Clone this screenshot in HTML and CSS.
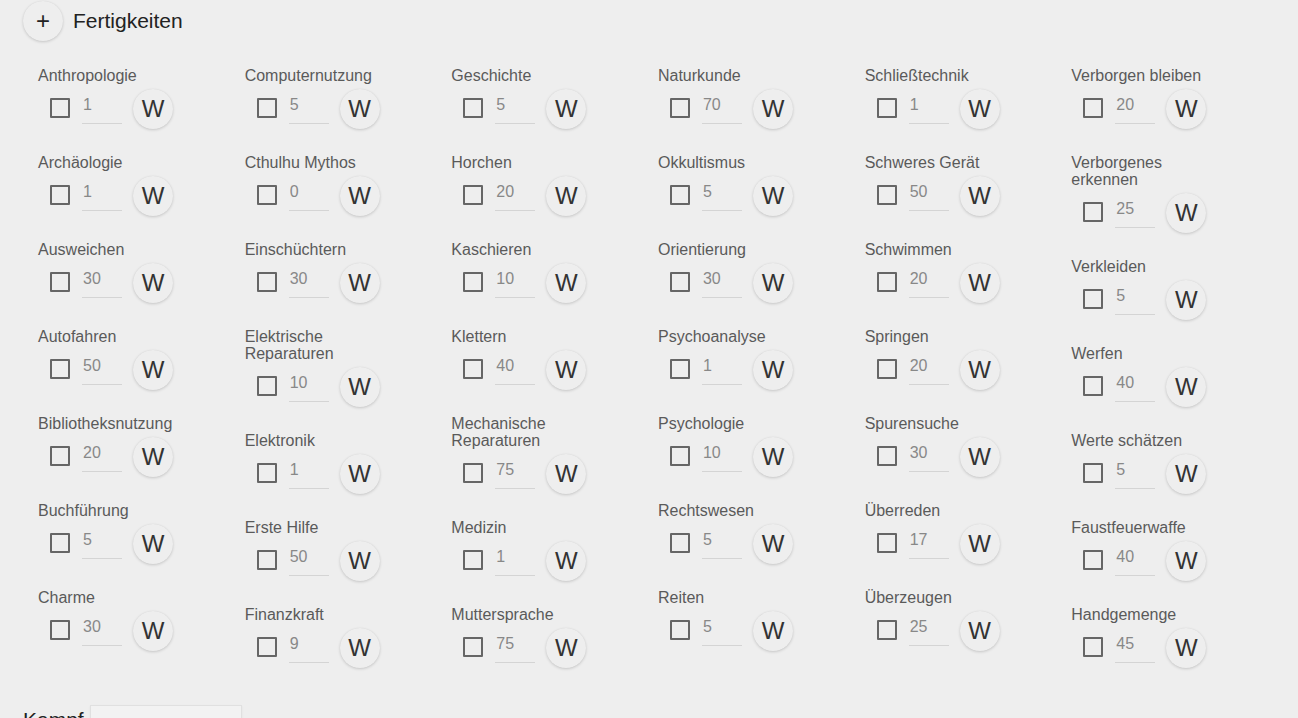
FILE: index.html
```html
<!DOCTYPE html>
<html lang="de">
<head>
  <meta charset="UTF-8">
  <title>Charakterbogen</title>
  <link rel="stylesheet" href="styles.css">
</head>
<body>

  <div class="section-head">
    <button class="round-btn add-btn" type="button">+</button>
    <h2>Fertigkeiten</h2>
  </div>

  <div class="skills">
    <div class="skill-col">
      <div class="skill"><label>Anthropologie</label><div class="skill-row"><input type="checkbox"><input class="val" type="text" value="1"><button class="round-btn w-btn" type="button">W</button></div></div>
      <div class="skill"><label>Archäologie</label><div class="skill-row"><input type="checkbox"><input class="val" type="text" value="1"><button class="round-btn w-btn" type="button">W</button></div></div>
      <div class="skill"><label>Ausweichen</label><div class="skill-row"><input type="checkbox"><input class="val" type="text" value="30"><button class="round-btn w-btn" type="button">W</button></div></div>
      <div class="skill"><label>Autofahren</label><div class="skill-row"><input type="checkbox"><input class="val" type="text" value="50"><button class="round-btn w-btn" type="button">W</button></div></div>
      <div class="skill"><label>Bibliotheksnutzung</label><div class="skill-row"><input type="checkbox"><input class="val" type="text" value="20"><button class="round-btn w-btn" type="button">W</button></div></div>
      <div class="skill"><label>Buchführung</label><div class="skill-row"><input type="checkbox"><input class="val" type="text" value="5"><button class="round-btn w-btn" type="button">W</button></div></div>
      <div class="skill"><label>Charme</label><div class="skill-row"><input type="checkbox"><input class="val" type="text" value="30"><button class="round-btn w-btn" type="button">W</button></div></div>
    </div>

    <div class="skill-col">
      <div class="skill"><label>Computernutzung</label><div class="skill-row"><input type="checkbox"><input class="val" type="text" value="5"><button class="round-btn w-btn" type="button">W</button></div></div>
      <div class="skill"><label>Cthulhu Mythos</label><div class="skill-row"><input type="checkbox"><input class="val" type="text" value="0"><button class="round-btn w-btn" type="button">W</button></div></div>
      <div class="skill"><label>Einschüchtern</label><div class="skill-row"><input type="checkbox"><input class="val" type="text" value="30"><button class="round-btn w-btn" type="button">W</button></div></div>
      <div class="skill"><label>Elektrische Reparaturen</label><div class="skill-row"><input type="checkbox"><input class="val" type="text" value="10"><button class="round-btn w-btn" type="button">W</button></div></div>
      <div class="skill"><label>Elektronik</label><div class="skill-row"><input type="checkbox"><input class="val" type="text" value="1"><button class="round-btn w-btn" type="button">W</button></div></div>
      <div class="skill"><label>Erste Hilfe</label><div class="skill-row"><input type="checkbox"><input class="val" type="text" value="50"><button class="round-btn w-btn" type="button">W</button></div></div>
      <div class="skill"><label>Finanzkraft</label><div class="skill-row"><input type="checkbox"><input class="val" type="text" value="9"><button class="round-btn w-btn" type="button">W</button></div></div>
    </div>

    <div class="skill-col">
      <div class="skill"><label>Geschichte</label><div class="skill-row"><input type="checkbox"><input class="val" type="text" value="5"><button class="round-btn w-btn" type="button">W</button></div></div>
      <div class="skill"><label>Horchen</label><div class="skill-row"><input type="checkbox"><input class="val" type="text" value="20"><button class="round-btn w-btn" type="button">W</button></div></div>
      <div class="skill"><label>Kaschieren</label><div class="skill-row"><input type="checkbox"><input class="val" type="text" value="10"><button class="round-btn w-btn" type="button">W</button></div></div>
      <div class="skill"><label>Klettern</label><div class="skill-row"><input type="checkbox"><input class="val" type="text" value="40"><button class="round-btn w-btn" type="button">W</button></div></div>
      <div class="skill"><label>Mechanische Reparaturen</label><div class="skill-row"><input type="checkbox"><input class="val" type="text" value="75"><button class="round-btn w-btn" type="button">W</button></div></div>
      <div class="skill"><label>Medizin</label><div class="skill-row"><input type="checkbox"><input class="val" type="text" value="1"><button class="round-btn w-btn" type="button">W</button></div></div>
      <div class="skill"><label>Muttersprache</label><div class="skill-row"><input type="checkbox"><input class="val" type="text" value="75"><button class="round-btn w-btn" type="button">W</button></div></div>
    </div>

    <div class="skill-col">
      <div class="skill"><label>Naturkunde</label><div class="skill-row"><input type="checkbox"><input class="val" type="text" value="70"><button class="round-btn w-btn" type="button">W</button></div></div>
      <div class="skill"><label>Okkultismus</label><div class="skill-row"><input type="checkbox"><input class="val" type="text" value="5"><button class="round-btn w-btn" type="button">W</button></div></div>
      <div class="skill"><label>Orientierung</label><div class="skill-row"><input type="checkbox"><input class="val" type="text" value="30"><button class="round-btn w-btn" type="button">W</button></div></div>
      <div class="skill"><label>Psychoanalyse</label><div class="skill-row"><input type="checkbox"><input class="val" type="text" value="1"><button class="round-btn w-btn" type="button">W</button></div></div>
      <div class="skill"><label>Psychologie</label><div class="skill-row"><input type="checkbox"><input class="val" type="text" value="10"><button class="round-btn w-btn" type="button">W</button></div></div>
      <div class="skill"><label>Rechtswesen</label><div class="skill-row"><input type="checkbox"><input class="val" type="text" value="5"><button class="round-btn w-btn" type="button">W</button></div></div>
      <div class="skill"><label>Reiten</label><div class="skill-row"><input type="checkbox"><input class="val" type="text" value="5"><button class="round-btn w-btn" type="button">W</button></div></div>
    </div>

    <div class="skill-col">
      <div class="skill"><label>Schließtechnik</label><div class="skill-row"><input type="checkbox"><input class="val" type="text" value="1"><button class="round-btn w-btn" type="button">W</button></div></div>
      <div class="skill"><label>Schweres Gerät</label><div class="skill-row"><input type="checkbox"><input class="val" type="text" value="50"><button class="round-btn w-btn" type="button">W</button></div></div>
      <div class="skill"><label>Schwimmen</label><div class="skill-row"><input type="checkbox"><input class="val" type="text" value="20"><button class="round-btn w-btn" type="button">W</button></div></div>
      <div class="skill"><label>Springen</label><div class="skill-row"><input type="checkbox"><input class="val" type="text" value="20"><button class="round-btn w-btn" type="button">W</button></div></div>
      <div class="skill"><label>Spurensuche</label><div class="skill-row"><input type="checkbox"><input class="val" type="text" value="30"><button class="round-btn w-btn" type="button">W</button></div></div>
      <div class="skill"><label>Überreden</label><div class="skill-row"><input type="checkbox"><input class="val" type="text" value="17"><button class="round-btn w-btn" type="button">W</button></div></div>
      <div class="skill"><label>Überzeugen</label><div class="skill-row"><input type="checkbox"><input class="val" type="text" value="25"><button class="round-btn w-btn" type="button">W</button></div></div>
    </div>

    <div class="skill-col">
      <div class="skill"><label>Verborgen bleiben</label><div class="skill-row"><input type="checkbox"><input class="val" type="text" value="20"><button class="round-btn w-btn" type="button">W</button></div></div>
      <div class="skill"><label>Verborgenes erkennen</label><div class="skill-row"><input type="checkbox"><input class="val" type="text" value="25"><button class="round-btn w-btn" type="button">W</button></div></div>
      <div class="skill"><label>Verkleiden</label><div class="skill-row"><input type="checkbox"><input class="val" type="text" value="5"><button class="round-btn w-btn" type="button">W</button></div></div>
      <div class="skill"><label>Werfen</label><div class="skill-row"><input type="checkbox"><input class="val" type="text" value="40"><button class="round-btn w-btn" type="button">W</button></div></div>
      <div class="skill"><label>Werte schätzen</label><div class="skill-row"><input type="checkbox"><input class="val" type="text" value="5"><button class="round-btn w-btn" type="button">W</button></div></div>
      <div class="skill"><label>Faustfeuerwaffe</label><div class="skill-row"><input type="checkbox"><input class="val" type="text" value="40"><button class="round-btn w-btn" type="button">W</button></div></div>
      <div class="skill"><label>Handgemenge</label><div class="skill-row"><input type="checkbox"><input class="val" type="text" value="45"><button class="round-btn w-btn" type="button">W</button></div></div>
    </div>
  </div>

  <div class="kampf">
    <span class="kampf-title">Kampf</span>
    <div class="kampf-box"></div>
  </div>

</body>
</html>
```

FILE: styles.css
```css
* {
  box-sizing: border-box;
  font-family: 'Liberation Sans', Arial, sans-serif;
}

body {
  margin: 0;
  padding: 0;
  background: #eeeeee;
  color: #555;
}

.round-btn {
  width: 40px;
  height: 40px;
  padding: 0;
  border: none;
  border-radius: 50%;
  background: #eeeeee;
  color: #222;
  box-shadow: 0 1px 3px rgba(0, 0, 0, 0.16), 0 0 1px rgba(0, 0, 0, 0.08);
  cursor: pointer;
  flex-shrink: 0;
}

.section-head {
  display: flex;
  align-items: center;
  gap: 10px;
  height: 41px;
  padding-left: 23px;
}

.add-btn {
  font-size: 24px;
  line-height: 40px;
}

.section-head h2 {
  margin: 0;
  font-size: 21px;
  font-weight: normal;
  color: #222;
}

.skills {
  display: grid;
  grid-template-columns: repeat(6, 206.67px);
  margin: 26px 0 0 38px;
}

.skill-col {
  display: flex;
  flex-direction: column;
}

.skill {
  width: 140px;
}

.skill label {
  display: block;
  font-size: 16px;
  line-height: 17px;
  color: #5a5a5a;
}

.skill-row {
  display: flex;
  align-items: flex-start;
  height: 40px;
  margin: 5px 0 25px;
}

.skill-row input[type="checkbox"] {
  appearance: none;
  width: 20px;
  height: 20px;
  margin: 9px 0 0 12px;
  border: 2px solid #666;
  border-radius: 1px;
  background: transparent;
}

.skill-row .val {
  width: 40px;
  height: 28px;
  margin: 7px 0 0 12px;
  padding: 0 1px 9px;
  border: none;
  border-bottom: 1px solid #d4d4d4;
  background: transparent;
  font-size: 16px;
  color: #888;
  outline: none;
}

.w-btn {
  margin-left: 11px;
  font-size: 24px;
  color: #333;
}

.kampf {
  display: flex;
  align-items: flex-start;
  gap: 6px;
  margin-top: 12px;
  padding-left: 23px;
}

.kampf-title {
  margin-top: 3px;
  font-size: 21px;
  line-height: 24px;
  color: #222;
}

.kampf-box {
  width: 152px;
  height: 36px;
  background: #f2f2f2;
  border: 1px solid #e0e0e0;
  box-shadow: 0 1px 2px rgba(0, 0, 0, 0.06);
}
```
